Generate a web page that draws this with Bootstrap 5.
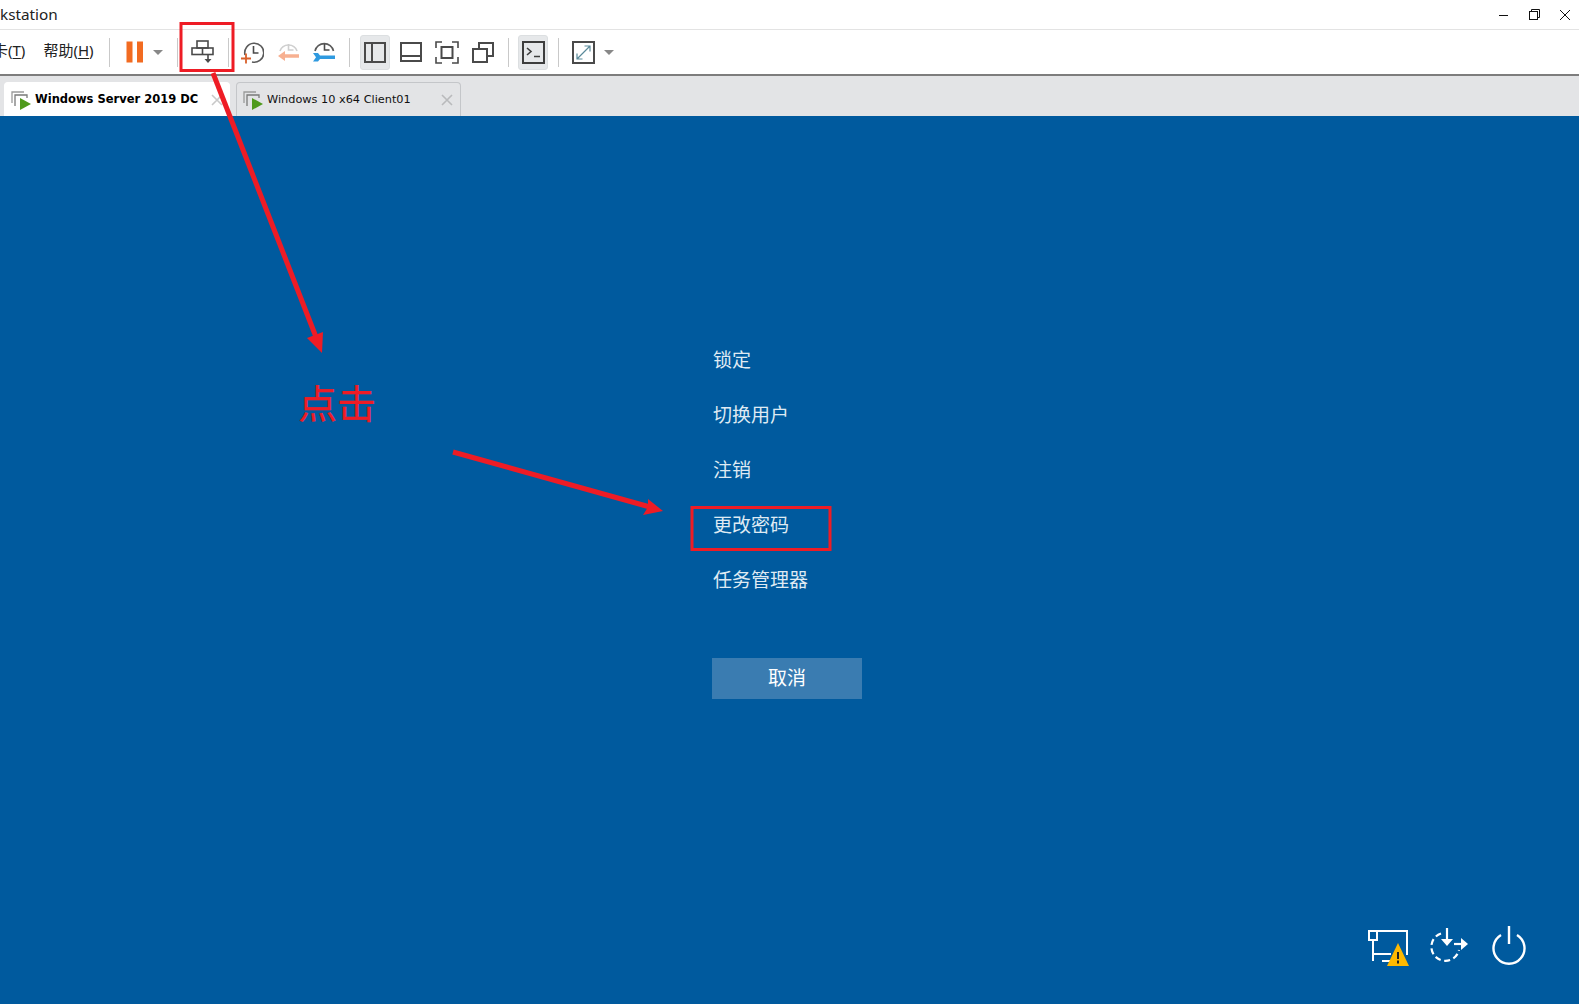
<!DOCTYPE html>
<html lang="zh-CN">
<head>
  <meta charset="UTF-8" />
  <title>VMware Workstation</title>
  <link href="https://cdn.jsdelivr.net/npm/bootstrap@5.3.3/dist/css/bootstrap.min.css" rel="stylesheet" />
  <style>
    html, body { height: 100%; overflow: hidden; }
    body { font-family: "Noto Sans", "Noto Sans CJK SC", sans-serif; background: #fff; }
    .win-title { height: 30px; border-bottom: 1px solid #e3e3e3; font-size: 15.3px; color: #222; line-height: 29px; }
    .win-ctl { margin-left: auto; padding-right: 8px; gap: 18px; }
    .tool-strip { height: 46px; border-bottom: 2px solid #7d7d7d; font-size: 15px; color: #222; }
    .menu-clip { width: 102px; overflow: hidden; white-space: nowrap; gap: 18px; margin-top: -3px; }
    .menu-clip span:first-child { margin-left: -7px; }
    .menu-clip u { text-underline-offset: 2px; }
    .tb-sep { width: 1px; height: 29px; background: #c9c9c9; margin: 0 7px; flex: none; }
    .tb-sep-wide { margin-left: 10px; margin-right: 9px; }
    .tb-btn { width: 36px; height: 35px; flex: none; }
    .tb-btn-sm { width: 30px; margin-right: 6px; }
    .tb-btn-last { margin-right: 0; }
    .tb-send { padding-right: 2px; }
    .tb-clock-first { margin-left: -2px; }
    .tb-sep-after-clock { margin-right: 10px; }
    .tb-on { background: #e6e8ea; border-radius: 3px; border: 1px solid #dcdfe1; }
    .tb-caret { width: 0; height: 0; border-left: 5px solid transparent; border-right: 5px solid transparent; border-top: 5px solid #888; }
    .caret-box { width: 17px; }
    .tab-strip { height: 40px; background: #e3e4e6; padding: 6px 0 0 4px; gap: 6px; }
    .vm-tab { width: 226px; height: 34px; font-family: "DejaVu Sans", sans-serif; font-size: 11.3px; color: #111; border: 1px solid #c4c6c9; border-bottom: 0; border-radius: 4px 4px 0 0; padding: 1px 7px 0 6px; }
    .vm-tab-on { background: #fff; font-weight: 700; color: #000; border-color: #fff; font-size: 11.5px; padding-right: 6px; }
    .vm-tab b, .vm-tab span { margin-left: 3px; white-space: nowrap; }
    .vm-tab-off { width: 225px; }
    .tab-x { margin-left: auto; flex: none; }
    .vm-screen { flex: 1 1 auto; background: #005a9e; color: #dfeaf3; font-family: "Noto Sans CJK SC", sans-serif; padding: 217px 0 0 713px; position: relative; }
    .sec-item { height: 55px; line-height: 52px; font-size: 19px; }
    .sec-cancel { width: 150px; height: 41px; margin: 50px 0 0 -1px; background: #3a7cb1; color: #fff; font-size: 19px; padding-bottom: 2px; }
    .sec-tray { position: absolute; right: 53px; bottom: 39px; height: 39px; gap: 21px; }
    .tray-net { margin-top: 3px; }
    .tray-shut { margin-top: 2px; margin-right: 2px; }
    .ann-layer { position: absolute; left: 0; top: 0; pointer-events: none; }
    .ann-text { position: absolute; left: 298px; top: 373px; font-family: "Noto Sans CJK SC", sans-serif; font-size: 39px; line-height: 56px; color: #ee1c25; -webkit-text-stroke: 0.3px #ee1c25; }
  </style>
</head>
<body class="d-flex flex-column">
  <div class="win-title d-flex align-items-center">
    <span>kstation</span>
    <div class="win-ctl d-flex align-items-center">
      <svg width="12" height="12" viewBox="0 0 12 12"><path d="M1 6.500h9" stroke="#111" fill="none"/></svg>
      <svg width="13" height="13" viewBox="0 0 13 13" fill="none" stroke="#111"><rect x="1.500" y="3.500" width="8" height="8"/><path d="M3.500 3.500v-2h8v8h-2"/></svg>
      <svg width="12" height="12" viewBox="0 0 12 12" fill="none" stroke="#111"><path d="M1 1l10 10M11 1L1 11"/></svg>
    </div>
  </div>

  <div class="tool-strip d-flex align-items-center">
    <div class="menu-clip d-flex">
      <span>卡(<u>T</u>)</span>
      <span>帮助(<u>H</u>)</span>
    </div>
    <div class="tb-sep"></div>
    <div class="tb-btn d-flex align-items-center justify-content-center">
      <svg width="18" height="22" viewBox="0 0 18 22"><rect x="0.500" y="0.500" width="6" height="21" fill="#f26b21"/><rect x="11" y="0.500" width="6" height="21" fill="#f26b21"/></svg>
    </div>
    <div class="caret-box d-flex align-items-center"><div class="tb-caret"></div></div>
    <div class="tb-sep"></div>
    <div class="tb-btn tb-send d-flex align-items-center justify-content-center">
      <svg width="23" height="24" viewBox="0 0 23 24" fill="none" stroke="#4a4a4a" stroke-width="1.600"><rect x="6" y="1" width="11" height="7"/><rect x="1" y="8" width="21" height="6.500"/><path d="M11.500 8v6.500"/><path d="M17 14.500v7"/><path d="M13.500 19l3.500 4 3.500-4z" fill="#4a4a4a" stroke="none"/></svg>
    </div>
    <div class="tb-sep"></div>
    <div class="tb-btn tb-clock-first d-flex align-items-center justify-content-center">
      <svg width="24" height="24" viewBox="0 0 24 24" fill="none"><path d="M5 15a9.500 9.500 0 1 1 7 7" stroke="#5a5a5a" stroke-width="1.600"/><path d="M13.500 6v7h5" stroke="#4a4a4a" stroke-width="1.600"/><path d="M1 18.500h10M6 13.500v10" stroke="#d9602b" stroke-width="1.800"/></svg>
    </div>
    <div class="tb-btn d-flex align-items-center justify-content-center">
      <svg width="24" height="24" viewBox="0 0 24 24" fill="none"><path d="M4 11a9 9 0 0 1 17 0" stroke="#cfcfcf" stroke-width="1.600"/><path d="M12.500 4v6h5" stroke="#cfcfcf" stroke-width="1.600"/><path d="M23 16H8" stroke="#f7b091" stroke-width="3.500"/><path d="M9 11l-7 5 7 5z" fill="#f7b091"/></svg>
    </div>
    <div class="tb-btn d-flex align-items-center justify-content-center">
      <svg width="24" height="24" viewBox="0 0 24 24" fill="none"><path d="M3 11a9.500 9.500 0 0 1 18.500 0" stroke="#5a5a5a" stroke-width="1.600"/><path d="M12.500 4v6h5" stroke="#4a4a4a" stroke-width="1.600"/><path d="M1 13h5l2 2.500h15v3.500H8l-2 2.500H1l3-4.200z" fill="#2f9ae0"/></svg>
    </div>
    <div class="tb-sep tb-sep-after-clock"></div>
    <div class="tb-btn tb-btn-sm tb-on d-flex align-items-center justify-content-center">
      <svg width="22" height="21" viewBox="0 0 22 21" fill="#e6e8ea" stroke="#4a4a4a" stroke-width="2"><rect x="1" y="1" width="20" height="19"/><path d="M8 1v19"/></svg>
    </div>
    <div class="tb-btn tb-btn-sm d-flex align-items-center justify-content-center">
      <svg width="22" height="20" viewBox="0 0 22 20" fill="none" stroke="#4a4a4a" stroke-width="2"><rect x="1" y="1" width="20" height="18"/><path d="M1 14h20"/></svg>
    </div>
    <div class="tb-btn tb-btn-sm d-flex align-items-center justify-content-center">
      <svg width="24" height="23" viewBox="0 0 24 23" fill="none" stroke="#4a4a4a" stroke-width="1.600"><rect x="6.500" y="6" width="11" height="11" stroke-width="2"/><path d="M1 7V1h6M17 1h6v6M23 16v6h-6M7 22H1v-6"/></svg>
    </div>
    <div class="tb-btn tb-btn-sm tb-btn-last d-flex align-items-center justify-content-center">
      <svg width="22" height="21" viewBox="0 0 22 21" fill="none" stroke="#4a4a4a" stroke-width="2"><rect x="1" y="7" width="14" height="13"/><path d="M7 7V1h14v13h-6"/></svg>
    </div>
    <div class="tb-sep tb-sep-wide"></div>
    <div class="tb-btn tb-btn-sm tb-btn-last tb-on d-flex align-items-center justify-content-center">
      <svg width="23" height="23" viewBox="0 0 23 23" fill="none" stroke="#3d3d3d" stroke-width="2"><rect x="1" y="1" width="21" height="21"/><path d="M5 7l4 3.500-4 3.500M12 15.500h6" stroke-width="1.600"/></svg>
    </div>
    <div class="tb-sep tb-sep-wide"></div>
    <div class="tb-btn tb-btn-sm d-flex align-items-center justify-content-center">
      <svg width="23" height="23" viewBox="0 0 23 23" fill="none" stroke="#4a4a4a" stroke-width="2"><rect x="1" y="1" width="21" height="21"/><path d="M5 18L18 5M12.500 5H18v5.500M5 12.500V18h5.500" stroke-width="1.200" stroke="#5a8a9a"/></svg>
    </div>
    <div class="tb-caret"></div>
  </div>

  <div class="tab-strip d-flex">
    <div class="vm-tab vm-tab-on d-flex align-items-center">
      <svg width="21" height="19" viewBox="0 0 21 19" fill="none"><path d="M1 12V1h12" stroke="#9a9a9a" stroke-width="1.300"/><path d="M4 15V4h12v3" stroke="#7a7a7a" stroke-width="1.300"/><path d="M9 7l11 6-11 6z" fill="#4f9a1c"/></svg>
      <b>Windows Server 2019 DC</b>
      <svg class="tab-x" width="12" height="12" viewBox="0 0 12 12"><path d="M1 1l10 10M11 1L1 11" stroke="#c9c9c9" stroke-width="1.600"/></svg>
    </div>
    <div class="vm-tab vm-tab-off d-flex align-items-center">
      <svg width="21" height="19" viewBox="0 0 21 19" fill="none"><path d="M1 12V1h12" stroke="#9a9a9a" stroke-width="1.300"/><path d="M4 15V4h12v3" stroke="#7a7a7a" stroke-width="1.300"/><path d="M9 7l11 6-11 6z" fill="#4f9a1c"/></svg>
      <span>Windows 10 x64 Client01</span>
      <svg class="tab-x" width="12" height="12" viewBox="0 0 12 12"><path d="M1 1l10 10M11 1L1 11" stroke="#b9babc" stroke-width="1.600"/></svg>
    </div>
  </div>

  <div class="vm-screen">
    <div class="sec-item">锁定</div>
    <div class="sec-item">切换用户</div>
    <div class="sec-item">注销</div>
    <div class="sec-item">更改密码</div>
    <div class="sec-item">任务管理器</div>
    <div class="sec-cancel d-flex align-items-center justify-content-center">取消</div>

    <div class="sec-tray d-flex align-items-start">
      <svg class="tray-net" width="41" height="37" viewBox="0 0 41 37" fill="none" stroke="#fff" stroke-width="2"><path d="M1 2h38v24M5 11v21M5 25h18M14 32h9"/><rect x="1" y="2" width="8" height="9"/><path d="M19 37L30 14l11 23z" fill="#ffb900" stroke="none"/><path d="M30 23v7M30 31.500v3" stroke="#222" stroke-width="2"/></svg>
      <svg class="tray-shut" width="39" height="35" viewBox="0 0 39 35" fill="none" stroke="#fff" stroke-width="2.200"><path d="M11 5.500A14 14 0 1 0 29 22" stroke-dasharray="6 3.500"/><path d="M17 0v15"/><path d="M11 11l6 7 6-7z" fill="#fff" stroke="none"/><path d="M24 16h10"/><path d="M31 10l7 6-7 6z" fill="#fff" stroke="none"/></svg>
      <svg width="34" height="39" viewBox="0 0 34 39" fill="none" stroke="#fff" stroke-width="2.400"><path d="M9 9a15.500 15.500 0 1 0 16 0"/><path d="M17 0v18"/></svg>
    </div>
  </div>

  <svg class="ann-layer" width="1579" height="1004" viewBox="0 0 1579 1004" fill="none">
    <rect x="181" y="23.500" width="52" height="47" stroke="#ee1c25" stroke-width="3"/>
    <rect x="692" y="507.500" width="138" height="42" stroke="#ee1c25" stroke-width="3"/>
    <path d="M213 73L316 337" stroke="#ee1c25" stroke-width="5"/>
    <path d="M322 353L307 338L315 335L323 332z" fill="#ee1c25"/>
    <path d="M453 452L650 507" stroke="#ee1c25" stroke-width="5"/>
    <path d="M663 511L643 515L648 507L648 499z" fill="#ee1c25"/>
  </svg>
  <div class="ann-text">点击</div>

  <script src="https://cdn.jsdelivr.net/npm/bootstrap@5.3.3/dist/js/bootstrap.bundle.min.js"></script>
</body>
</html>
